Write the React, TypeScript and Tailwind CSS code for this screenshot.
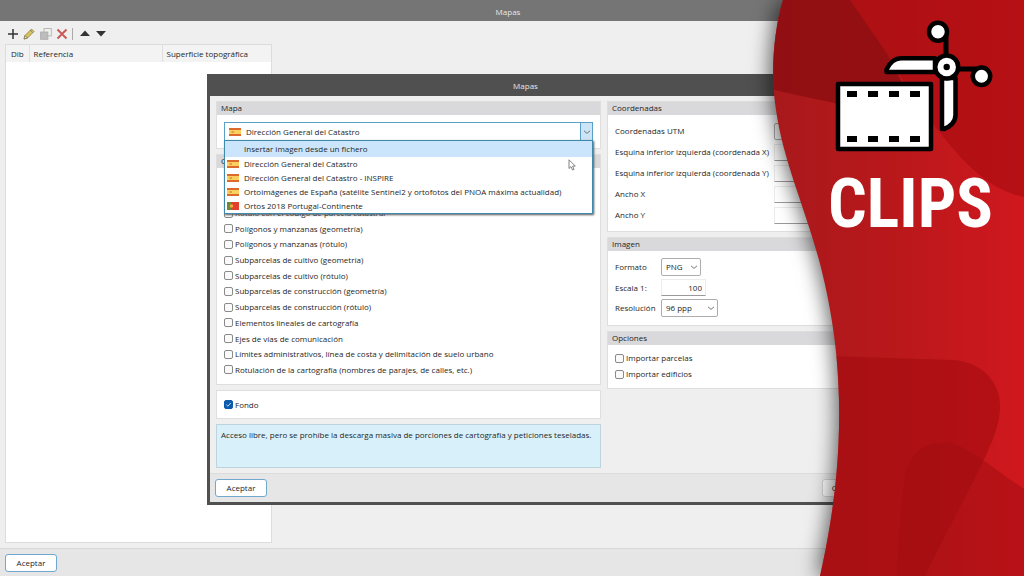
import { useState, ReactNode } from "react";

type Flag = "es" | "pt" | null;
type Source = { id: number; name: string; flag: Flag };

const SOURCES: Source[] = [
  { id: 0, name: "Insertar imagen desde un fichero", flag: null },
  { id: 1, name: "Dirección General del Catastro", flag: "es" },
  { id: 2, name: "Dirección General del Catastro - INSPIRE", flag: "es" },
  { id: 3, name: "Ortoimágenes de España (satélite Sentinel2 y ortofotos del PNOA máxima actualidad)", flag: "es" },
  { id: 4, name: "Ortos 2018 Portugal-Continente", flag: "pt" },
];

const LAYERS = [
  "Rótulo con el código de parcela catastral",
  "Polígonos y manzanas (geometría)",
  "Polígonos y manzanas (rótulo)",
  "Subparcelas de cultivo (geometría)",
  "Subparcelas de cultivo (rótulo)",
  "Subparcelas de construcción (geometría)",
  "Subparcelas de construcción (rótulo)",
  "Elementos lineales de cartografía",
  "Ejes de vías de comunicación",
  "Límites administrativos, línea de costa y delimitación de suelo urbano",
  "Rotulación de la cartografía (nombres de parajes, de calles, etc.)",
];

const COORDS = [
  "Coordenadas UTM",
  "Esquina inferior izquierda (coordenada X)",
  "Esquina inferior izquierda (coordenada Y)",
  "Ancho X",
  "Ancho Y",
];

function FlagIcon({ flag }: { flag: Flag }) {
  if (flag === "es") {
    return (
      <svg className="h-2 w-3 shrink-0" viewBox="0 0 12 8" aria-hidden="true">
        <rect width="12" height="8" fill="#dc6a2c" />
        <rect y="2" width="12" height="4" fill="#fbcf5e" />
        <rect x="2.500" y="3" width="2.500" height="2" fill="#dfa04a" />
      </svg>
    );
  }
  if (flag === "pt") {
    return (
      <svg className="h-2 w-3 shrink-0" viewBox="0 0 12 8" aria-hidden="true">
        <rect width="12" height="8" fill="#e2402e" />
        <rect width="4" height="8" fill="#6d8a3c" />
        <circle cx="4.500" cy="4" r="1.8" fill="#f0a93a" />
      </svg>
    );
  }
  return <span className="w-3 shrink-0" />;
}

function Chevron() {
  return (
    <svg className="h-2 w-2" viewBox="0 0 8 8" fill="none" stroke="#666" strokeWidth="0.9" aria-hidden="true">
      <path d="M1 2.8 4 5.4 7 2.8" />
    </svg>
  );
}

function Group({ title, className = "", children }: { title: string; className?: string; children: ReactNode }) {
  return (
    <section className={`border border-[#dedede] bg-white ${className}`}>
      <h2 className="h-[13px] bg-[#d9d8da] pl-1 text-[8px] leading-[12px]">{title}</h2>
      {children}
    </section>
  );
}

function Check({ label, defaultChecked = false }: { label: string; defaultChecked?: boolean }) {
  return (
    <label className="flex h-3 items-center gap-[2px] whitespace-nowrap">
      <span className="relative flex size-[9px] shrink-0">
        <input
          type="checkbox"
          defaultChecked={defaultChecked}
          className="peer size-[9px] appearance-none rounded-[2px] border border-[#8a8a8a] bg-[#fafafa] checked:border-[#0b5cad] checked:bg-[#0b5cad]"
        />
        <svg className="pointer-events-none absolute inset-0 hidden size-[9px] peer-checked:block" viewBox="0 0 9 9" fill="none" stroke="#b9dcff" aria-hidden="true">
          <path d="M2.3 4.7 3.9 6.2 6.8 3" />
        </svg>
      </span>
      {label}
    </label>
  );
}

function Picker({ id, options, className }: { id: string; options: string[]; className: string }) {
  return (
    <span className={`relative block h-[18px] ${className}`}>
      <select id={id} className="h-full w-full appearance-none rounded-[2px] border border-[#adadad] bg-white pl-1 text-[8px]">
        {options.map((o) => (
          <option key={o}>{o}</option>
        ))}
      </select>
      <span className="pointer-events-none absolute right-[3px] top-[5px]">
        <Chevron />
      </span>
    </span>
  );
}

function PushButton({ children, primary = false }: { children: ReactNode; primary?: boolean }) {
  return (
    <button
      className={`h-[18px] w-[52px] rounded-[3px] border text-[8px] ${primary ? "border-[#6fa9cf] bg-white" : "border-[#d0d0d0] bg-[#fbfbfb]"}`}
    >
      {children}
    </button>
  );
}

function Toolbar() {
  return (
    <div className="flex h-[17px] items-center pl-[2px] text-[#333]">
      <button aria-label="Añadir" className="mr-1">
        <svg className="size-3" viewBox="0 0 12 12" stroke="currentColor" strokeWidth="1.5"><path d="M6 1v10M1 6h10" /></svg>
      </button>
      <button aria-label="Editar" className="mr-[5px]">
        <svg className="size-3" viewBox="0 0 12 12">
          <path d="M1 11 2 7.5 8.5 1 11 3.5 4.5 10Z" fill="#d9c15a" stroke="#7d7345" strokeWidth=".7" />
          <path d="M1 11 2 7.5 4.5 10ZM7.3 2.2 9.8 4.7" fill="#f0dfb8" stroke="#776e4a" strokeWidth=".7" />
        </svg>
      </button>
      <button aria-label="Copiar" className="mr-1">
        <svg className="size-3" viewBox="0 0 12 12" strokeWidth=".8">
          <rect x="4" y=".6" width="7.3" height="7.3" fill="#f0f0f0" stroke="#aaa" />
          <rect x=".6" y="4" width="7.3" height="7.3" fill="#bcbcbc" stroke="#aaa" />
        </svg>
      </button>
      <button aria-label="Eliminar">
        <svg className="size-3" viewBox="0 0 12 12" stroke="#c95b5b" strokeWidth="2"><path d="m1.5 1.5 9 9M10.5 1.5l-9 9" /></svg>
      </button>
      <span className="mx-1 h-3 w-px bg-[#aaa]" />
      <button aria-label="Subir" className="ml-[2px] mr-1">
        <svg className="size-3" viewBox="0 0 12 12" fill="currentColor"><path d="M6 2.5 11 8H1Z" /></svg>
      </button>
      <button aria-label="Bajar">
        <svg className="size-3" viewBox="0 0 12 12" fill="currentColor"><path d="M6 8.500 1 3h10Z" /></svg>
      </button>
    </div>
  );
}

function SourcePicker() {
  const [selected, setSelected] = useState(1);
  const [open, setOpen] = useState(true);
  const current = SOURCES[selected];

  return (
    <div className="relative">
      <button
        aria-haspopup="listbox"
        aria-expanded={open}
        aria-label="Mapa"
        onClick={() => setOpen(!open)}
        className="flex h-[19px] w-full items-center gap-[5px] border border-[#5a9fc6] bg-white pl-1"
      >
        <FlagIcon flag={current.flag} />
        <span className="flex-1 text-left">{current.name}</span>
        <span className="flex h-full w-3 items-center justify-center border-l border-[#5a9fc6] bg-[#cce4f7]">
          <Chevron />
        </span>
      </button>
      {open && (
        <ul role="listbox" aria-label="Mapa" className="absolute inset-x-0 top-[18px] z-10 border border-[#3f89aa] bg-white shadow-[1px_1px_2px_#555]">
          {SOURCES.map((s) => (
            <li
              key={s.id}
              role="option"
              aria-selected={s.id === selected}
              onClick={() => { setSelected(s.id); setOpen(false); }}
              className={`flex items-center gap-[5px] whitespace-nowrap pl-[2px] ${s.id === 0 ? "h-4 bg-[#cbe6fc]" : "h-[14px]"}`}
            >
              <FlagIcon flag={s.flag} />
              {s.name}
            </li>
          ))}
        </ul>
      )}
      {/* mouse pointer */}
      <svg className="pointer-events-none absolute right-[17px] top-[37px] z-20 h-3 w-2" viewBox="0 0 8 12" fill="#fff" stroke="#666" strokeWidth=".8">
        <path d="M1 .8V9.500l2-1.900 1.500 3.400 1.500-.7L4.600 7.100h2.700Z" />
      </svg>
    </div>
  );
}

function MapDialog() {
  return (
    <div role="dialog" aria-label="Mapas" className="absolute left-[207px] right-[142px] top-[74px] flex h-[431px] flex-col border-[3px] border-t-0 border-[#505050] bg-[#efeff0]">
      <h1 className="h-[22px] shrink-0 bg-[#505050] pr-[38px] text-center leading-[24px] text-[#e6e6e6]">Mapas</h1>

      <div className="flex flex-1 gap-[6px] pb-[5px] pl-[6px] pr-[5px] pt-[5px]">
        <div className="flex w-[385px] shrink-0 flex-col gap-[5px]">
          <Group title="Mapa" className="h-12">
            <div className="p-[7px]">
              <SourcePicker />
            </div>
          </Group>
          <Group title="Capas" className="flex flex-1 flex-col">
            {/* the open source list lies over the top of this block */}
            <div className="flex flex-1 flex-col justify-between px-[7px] pb-2 pt-[39px]">
              {LAYERS.map((l) => <Check key={l} label={l} />)}
            </div>
          </Group>
          <div className="flex h-[29px] items-center border border-[#dedede] bg-white px-[7px]">
            <Check label="Fondo" defaultChecked />
          </div>
          <p className="h-11 border border-[#bfd3dc] bg-[#d8f0fa] px-1 pt-1 leading-3">
            Acceso libre, pero se prohíbe la descarga masiva de porciones de cartografía y peticiones teseladas.
          </p>
        </div>

        <div className="flex min-w-0 flex-1 flex-col gap-[5px]">
          <Group title="Coordenadas">
            <div className="flex flex-col gap-[3px] px-[7px] py-[7px]">
              {COORDS.map((c, i) => (
                <div key={c} className="flex h-[18px] items-center">
                  <label htmlFor={`coord-${i}`} className="w-[159px] shrink-0 whitespace-nowrap">{c}</label>
                  <input
                    id={`coord-${i}`}
                    className={`h-[17px] min-w-0 flex-1 border bg-white ${i === 0 ? "rounded-[2px] border-[#adadad]" : "border-[#ececec] border-b-[#9a9a9a]"}`}
                  />
                </div>
              ))}
            </div>
          </Group>
          <Group title="Imagen">
            <div className="grid grid-cols-[46px_1fr] items-center gap-y-[3px] px-[7px] pb-2 pt-[7px]">
              <label htmlFor="format">Formato</label>
              <Picker id="format" className="w-10" options={["PNG", "JPG"]} />
              <label htmlFor="scale">Escala 1:</label>
              <input id="scale" defaultValue="100" className="h-[17px] w-[45px] border border-[#ececec] border-b-[#9a9a9a] bg-white pr-[3px] text-right" />
              <label htmlFor="dpi">Resolución</label>
              <Picker id="dpi" className="w-[57px]" options={["96 ppp", "150 ppp", "300 ppp"]} />
            </div>
          </Group>
          <Group title="Opciones">
            <div className="flex flex-col gap-1 px-[7px] pb-2 pt-[7px]">
              <Check label="Importar parcelas" />
              <Check label="Importar edificios" />
            </div>
          </Group>
        </div>
      </div>

      <div className="flex h-[29px] shrink-0 items-center justify-between border-t border-[#dcdcdc] bg-[#e6e6e6] px-[5px]">
        <PushButton primary>Aceptar</PushButton>
        <PushButton>Cancelar</PushButton>
      </div>
    </div>
  );
}

function ClipsBanner() {
  return (
    <aside className="absolute inset-y-0 right-0 z-30 w-[251px]">
      <svg className="absolute inset-0 h-full w-full overflow-visible drop-shadow-[-3px_0_10px_rgba(0,0,0,0.6)]" viewBox="773 0 251 576" preserveAspectRatio="none" aria-hidden="true">
        <defs>
          <linearGradient id="red" x1="0" x2="1" y1="0" y2="0">
            <stop offset="0" stopColor="#a6191c" />
            <stop offset=".5" stopColor="#b9181b" />
            <stop offset="1" stopColor="#d0181e" />
          </linearGradient>
          <clipPath id="edge">
            <path d="M783 0C774 30 770 72 776 110C783 160 804 205 819 260C829 298 838 345 839 400C840 450 836 505 820 576H1024V0Z" />
          </clipPath>
        </defs>
        <g clipPath="url(#edge)">
          <rect x="760" width="264" height="576" fill="url(#red)" />
          <path d="M850 0 888 55C905 85 922 112 938 130C965 165 990 190 1024 197V0Z" fill="#ab0d11" fillOpacity=".7" />
          <path d="M765 88C800 95 850 108 920 118L888 55 850 0H765Z" fill="#8d0e11" fillOpacity=".85" />
          <path d="M830 356 952 360C985 362 1001 385 1000 408C999 440 975 475 925 576H800Z" fill="#a40b0f" fillOpacity=".6" />
          <path d="M897 576C899 535 902 490 906 472C913 448 930 440 950 443C970 448 990 466 1024 489V576Z" fill="#a00b0f" fillOpacity=".5" />
        </g>
      </svg>

      <div className="relative flex flex-col pl-[57px] pt-[18px] text-white">
        <svg className="h-[136px] w-[166px]" viewBox="830 18 166 136" aria-hidden="true">
          <g fill="#fff" stroke="#000" strokeWidth="4.500" strokeLinejoin="round">
            <rect x="838" y="84" width="93" height="65" />
            <path d="M886.500 72V69.500C890 62 895 58.200 901 58.200H935V72Z" />
            <path d="M942 78H955.500V115C955.500 122 950 127 944 129H942Z" />
            <path d="M946 31V60M955 69H984" strokeWidth="5" />
            <circle cx="938" cy="31.700" r="9" />
            <circle cx="981.500" cy="76.300" r="8.700" />
            <circle cx="946.700" cy="67" r="11.500" />
          </g>
          <circle cx="946.700" cy="67" r="3.200" />
          <path d="M847 91h10v6h-10ZM868 91h10v6h-10ZM889 91h10v6h-10ZM910 91h10v6h-10ZM847 136h10v6h-10ZM868 136h10v6h-10ZM889 136h10v6h-10ZM910 136h10v6h-10Z" />
        </svg>
        <strong className="-ml-[2px] mt-[10px] font-['Roboto_Condensed','Liberation_Sans_Narrow',Roboto,sans-serif] text-[68px] font-bold leading-[80px]">CLIPS</strong>
      </div>
    </aside>
  );
}

export default function App() {
  return (
    <main className="relative flex min-h-screen flex-col overflow-hidden bg-[#efefef] font-['Open_Sans','Noto_Sans',sans-serif] text-[8px] text-[#262626]">
      <h1 className="h-[21px] shrink-0 bg-[#757575] pr-2 text-center leading-[24px] text-[#e8e8e8]">Mapas</h1>

      <div className="flex flex-1 flex-col px-[5px] pb-[5px] pt-1">
        <Toolbar />
        <div className="mt-[2px] w-[267px] flex-1 border border-[#dcdcdc] bg-white">
          <table className="w-full table-fixed text-left">
            <thead className="bg-[#f3f3f3]">
              <tr className="h-[17px]">
                <th className="w-[23px] border-r border-[#e0e0e0] pl-[5px] font-normal">Dib</th>
                <th className="w-[133px] border-r border-[#e0e0e0] pl-1 font-normal">Referencia</th>
                <th className="pl-1 font-normal">Superficie topográfica</th>
              </tr>
            </thead>
            <tbody />
          </table>
        </div>
      </div>

      <div className="flex h-7 shrink-0 items-center border-t border-[#d8d8d8] bg-[#e6e6e6] px-[5px]">
        <PushButton primary>Aceptar</PushButton>
      </div>

      <MapDialog />
      <ClipsBanner />
    </main>
  );
}
